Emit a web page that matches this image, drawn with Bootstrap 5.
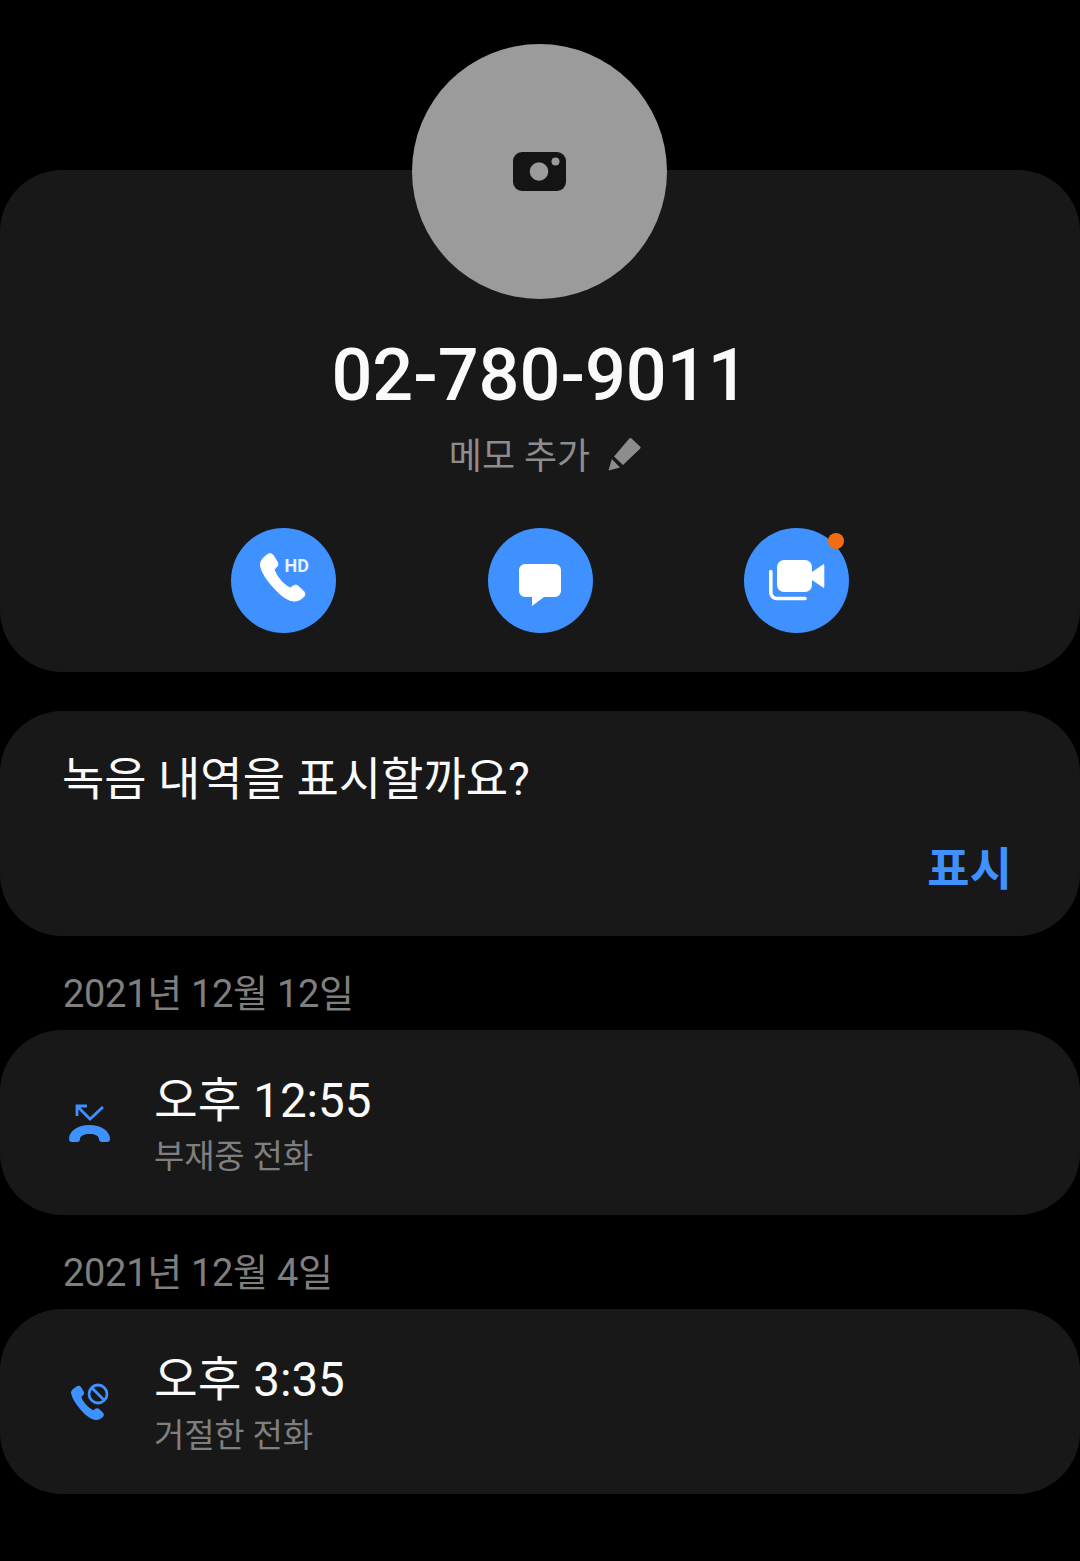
<!DOCTYPE html>
<html lang="ko">
  <head>
    <meta charset="UTF-8" />
    <meta name="viewport" content="width=device-width, initial-scale=1.0" />
    <title>통화 기록</title>
    <link href="https://cdn.jsdelivr.net/npm/bootstrap@5.3.0/dist/css/bootstrap.min.css" rel="stylesheet" />
    <style>
      body {
        background: #000;
        font-family: "Roboto", "Noto Sans CJK KR", sans-serif;
        color: #fafafa;
        height: 1561px;
        overflow: hidden;
      }
      .panel {
        background: #181818;
        border-radius: 62px;
      }
      .avatar-wrap {
        padding-top: 44px;
        margin-bottom: -129px;
        position: relative;
        z-index: 1;
      }
      .avatar {
        width: 255px;
        height: 255px;
        border-radius: 50%;
        background: #9b9b9b;
        margin-left: 412px;
      }
      .profile-panel {
        height: 502px;
        padding-top: 164px;
      }
      .phone-no {
        font-family: "Roboto", sans-serif;
        font-size: 72px;
        font-weight: 500;
        line-height: 84px;
        letter-spacing: 0;
      }
      .memo {
        color: #8d8d8d;
        font-size: 36px;
        line-height: 48px;
        margin-top: 15px;
        padding-left: 10px;
        gap: 17px;
      }
      .memo svg {
        margin-top: -6px;
      }
      .actions {
        margin-top: 47px;
        padding-left: 231px;
        gap: 151.5px;
      }
      .round-btn {
        width: 105px;
        height: 105px;
        border-radius: 50%;
        background: #3e91ff;
        position: relative;
      }
      .round-btn svg {
        display: block;
      }
      .dot {
        position: absolute;
        top: 5px;
        right: 5px;
        width: 16px;
        height: 16px;
        border-radius: 50%;
        background: #f46c12;
      }
      .prompt-panel {
        height: 225px;
        margin-top: 39px;
        padding: 39px 68px 0 62px;
      }
      .prompt-text {
        font-size: 46px;
        line-height: 58px;
      }
      .prompt-action {
        color: #3e91ff;
        font-size: 46px;
        font-weight: 700;
        line-height: 58px;
        margin-top: 32px;
        text-align: right;
      }
      .date-label {
        color: #7f7f7f;
        font-size: 38px;
        line-height: 48px;
        letter-spacing: -0.3px;
        padding-left: 63px;
        margin-top: 34px;
        margin-bottom: 12px;
      }
      .log-panel {
        height: 185px;
        padding-left: 64px;
      }
      .log-icon {
        width: 52px;
        height: 52px;
        margin-right: 38px;
        flex: none;
      }
      .log-text {
        padding-top: 6px;
      }
      .log-time {
        font-size: 47.5px;
        line-height: 58px;
      }
      .log-type {
        color: #7f7f7f;
        font-size: 33px;
        line-height: 44px;
        margin-top: 5px;
        letter-spacing: -0.2px;
      }
    </style>
  </head>

  <body>
    <div class="avatar-wrap">
      <div class="avatar d-flex align-items-center justify-content-center">
        <svg width="54" height="40" viewBox="0 0 54 40">
          <rect x="0" y="0" width="53" height="39" rx="9" fill="#141414" />
          <circle cx="26" cy="19.500" r="9.300" fill="#9b9b9b" />
          <circle cx="42.500" cy="9.500" r="4" fill="#9b9b9b" />
        </svg>
      </div>
    </div>

    <div class="panel profile-panel">
      <div class="phone-no text-center">02-780-9011</div>
      <div class="memo d-flex align-items-center justify-content-center">
        <span>메모 추가</span>
        <svg width="34" height="34" viewBox="0 0 34 34">
          <path d="M24.500 1.500 33 9.500a1.500 1.500 0 0 1 0 2.200L16 28 7 19.500 22.300 1.500a1.500 1.500 0 0 1 2.200 0Z" fill="#8d8d8d" />
          <path d="M4.800 22 13 30.500 1.500 33.500Z" fill="#8d8d8d" />
        </svg>
      </div>
      <div class="actions d-flex">
        <div class="round-btn">
          <svg width="105" height="105" viewBox="0 0 105 105">
            <path d="M36.500 26.500c2-1.500 4.500-1 5.800 1l4 6.500c1 1.700.7 3.700-.7 5l-2.500 2.300c1 3.500 3.300 7.200 6.500 11 3.200 3.800 6.500 6.300 9.700 7.600l2.900-2c1.600-1.100 3.700-1 5.100.3l5.300 5c1.700 1.600 1.700 4.300-.1 5.800-3.200 3-7 4.700-11.300 3.800-6-1.200-12.500-6.200-19.500-14.300C35.200 51.400 30.800 44 29.600 38c-1-4.500 3-8.800 6.900-11.500Z" fill="#fff" stroke="#fff" stroke-width="1" />
            <text x="53.500" y="44" font-family="Roboto, sans-serif" font-size="18" font-weight="700" fill="#e8f2ff">HD</text>
          </svg>
        </div>
        <div class="round-btn">
          <svg width="105" height="105" viewBox="0 0 105 105">
            <path d="M37 36h30a6 6 0 0 1 6 6v21a6 6 0 0 1-6 6H56L44 78v-9h-7a6 6 0 0 1-6-6V42a6 6 0 0 1 6-6Z" fill="#fff" />
          </svg>
        </div>
        <div class="round-btn">
          <svg width="105" height="105" viewBox="0 0 105 105">
            <rect x="33" y="32" width="35" height="32" rx="7" fill="#fff" />
            <path d="M68 44 79 36.500c.7-.5 1.300-.2 1.300.7v21.600c0 .9-.6 1.200-1.300.7L68 52Z" fill="#fff" />
            <path d="M26.800 43.500v21a6 6 0 0 0 6 6H61" fill="none" stroke="#fff" stroke-width="3.600" stroke-linecap="round" />
          </svg>
          <span class="dot"></span>
        </div>
      </div>
    </div>

    <div class="panel prompt-panel">
      <div class="prompt-text">녹음 내역을 표시할까요?</div>
      <div class="prompt-action">표시</div>
    </div>

    <div class="date-label">2021년 12월 12일</div>
    <div class="panel log-panel d-flex align-items-center">
      <svg class="log-icon" viewBox="0 0 52 52">
        <path d="M13 19V9h10M13 9l13 13L39 10" fill="none" stroke="#3e91ff" stroke-width="2.800" />
        <path d="M5 42c0-8 9-14 20.500-14S46 34 46 42c0 2-1 3-3 3h-5c-2 0-3-1-3-3 0-3-4-5-9.500-5S16 39 16 42c0 2-1 3-3 3H8c-2 0-3-1-3-3Z" fill="#3e91ff" />
      </svg>
      <div class="log-text">
        <div class="log-time">오후 12:55</div>
        <div class="log-type">부재중 전화</div>
      </div>
    </div>

    <div class="date-label">2021년 12월 4일</div>
    <div class="panel log-panel d-flex align-items-center">
      <svg class="log-icon" viewBox="0 0 52 52">
        <path transform="translate(2.500 3) scale(.87)" d="M11.500 8.500c1.800-1.400 4-1 5.200.8l3 5c1 1.500.6 3.300-.6 4.500l-2 1.900c1 3 2.800 6 5.500 9 2.700 3 5.500 5.200 8.200 6.300l2.300-1.700c1.400-1 3.200-.9 4.500.3l4.200 4c1.500 1.400 1.500 3.800-.1 5.100-2.700 2.600-6 4-9.700 3.200-5-1-10.500-5.300-16.300-12C9.900 28 6.300 21.800 5.300 16.800c-.7-3.500 3-6.300 6.200-8.300Z" fill="#3e91ff" />
        <circle cx="34" cy="18" r="9" fill="none" stroke="#3e91ff" stroke-width="2.800" />
        <path d="M28 12 40 24" stroke="#3e91ff" stroke-width="2.800" />
      </svg>
      <div class="log-text">
        <div class="log-time">오후 3:35</div>
        <div class="log-type">거절한 전화</div>
      </div>
    </div>

    <script src="https://cdn.jsdelivr.net/npm/bootstrap@5.3.0/dist/js/bootstrap.bundle.min.js"></script>
  </body>
</html>
